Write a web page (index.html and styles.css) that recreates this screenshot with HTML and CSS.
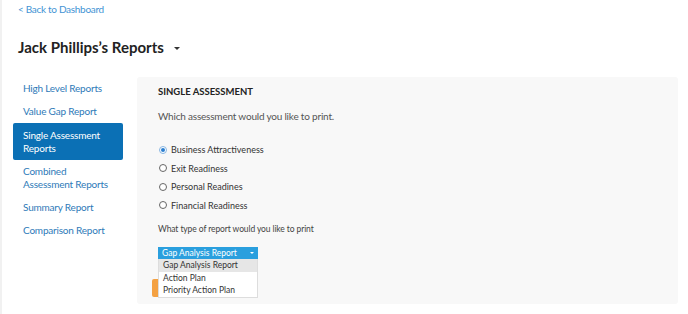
FILE: index.html
```html
<!DOCTYPE html>
<html>
<head>
<meta charset="utf-8">
<link rel="stylesheet" href="styles.css">
</head>
<body>
<div class="page">
  <a class="back" href="#">&lt; Back to Dashboard</a>
  <h1 class="title">Jack Phillips’s Reports <span class="caret"></span></h1>
  <div class="main">
    <nav class="side">
      <a class="item" href="#">High Level Reports</a>
      <a class="item" href="#">Value Gap Report</a>
      <a class="item active" href="#">Single Assessment Reports</a>
      <a class="item" href="#">Combined Assessment Reports</a>
      <a class="item" href="#">Summary Report</a>
      <a class="item" href="#">Comparison Report</a>
    </nav>
    <section class="panel">
      <h2 class="heading">SINGLE ASSESSMENT</h2>
      <p class="question">Which assessment would you like to print.</p>
      <ul class="radios">
        <li class="radio checked"><span class="dot"></span>Business Attractiveness</li>
        <li class="radio"><span class="dot"></span>Exit Readiness</li>
        <li class="radio"><span class="dot"></span>Personal Readines</li>
        <li class="radio"><span class="dot"></span>Financial Readiness</li>
      </ul>
      <p class="question small">What type of report would you like to print</p>
      <div class="selectwrap">
        <div class="orange"></div>
        <div class="select">Gap Analysis Report<span class="scaret"></span></div>
        <ul class="options">
          <li class="opt hl">Gap Analysis Report</li>
          <li class="opt">Action Plan</li>
          <li class="opt">Priority Action Plan</li>
        </ul>
      </div>
    </section>
  </div>
</div>
</body>
</html>
```
FILE: styles.css
```css
html, body { margin: 0; padding: 0; background: #fff; }
body { font-family: Lato, "Open Sans", sans-serif; color: #333; }
.page { border-left: 2px solid #f1f1f1; height: 314px; box-sizing: border-box; padding: 2px 10px 0 11px; }
.back { display: block; margin-left: 5px; font-size: 10px; line-height: 14px; letter-spacing: -0.3px; color: #4293d4; text-decoration: none; }
.title { margin: 21px 0 0 5px; font-size: 15px; line-height: 20px; font-weight: 700; color: #222; display: flex; align-items: center; }
.caret { display: inline-block; width: 0; height: 0; border-left: 3px solid transparent; border-right: 3px solid transparent; border-top: 3px solid #333; margin-left: 10px; margin-top: 2px; }
.main { display: flex; gap: 14px; margin-top: 20px; }
.side { width: 110px; display: flex; flex-direction: column; }
.item { display: block; padding: 5px 12px 5px 10px; font-size: 10px; line-height: 13px; letter-spacing: -0.2px; color: #2e7ab8; text-decoration: none; border-radius: 2px; }
.item.active { background: #0b70b5; color: #fff; padding: 5.5px 12px 5.5px 10px; }
.panel { flex: 1; height: 227px; background: #f8f8f8; border-radius: 3px; padding: 8px 21px 0; box-sizing: border-box; }
.heading { margin: 0; font-size: 9.5px; line-height: 14px; font-weight: 700; color: #222; }
.question { margin: 10px 0 0; font-size: 10px; line-height: 14px; letter-spacing: -0.2px; color: #555; }
.question.small { font-size: 8.5px; letter-spacing: -0.1px; margin-top: 7px; color: #444; }
.radios { list-style: none; margin: 17.5px 0 0; padding: 0; }
.radio { display: flex; align-items: center; height: 18.5px; font-size: 9px; color: #333; }
.dot { width: 6px; height: 6px; border: 1px solid #666; border-radius: 50%; margin: 0 4px 0 1px; box-sizing: content-box; background: #fff; position: relative; }
.radio.checked .dot { border-color: #89b6e2; }
.radio.checked .dot::after { content: ""; position: absolute; left: 1px; top: 1px; width: 4px; height: 4px; border-radius: 50%; background: #2c7fd0; }
.selectwrap { position: relative; margin-top: 11.5px; width: 100px; }
.select { height: 12px; background: #2a9fde; color: #fff; font-size: 8.5px; line-height: 12px; padding: 0 4px; display: flex; justify-content: space-between; align-items: center; position: relative; z-index: 2; }
.scaret { width: 0; height: 0; border-left: 2.5px solid transparent; border-right: 2.5px solid transparent; border-top: 2.5px solid #fff; }
.options { list-style: none; margin: 0; padding: 0; background: #fff; border: 1px solid #ddd; border-top: none; position: relative; z-index: 2; }
.opt { height: 12.5px; line-height: 12.5px; font-size: 8.5px; padding: 0 4px; color: #333; }
.opt.hl { background: #e6e6e6; }
.orange { position: absolute; left: -6px; top: 32px; width: 103px; height: 18px; background: #f4a142; border-radius: 2px; z-index: 1; }
```
